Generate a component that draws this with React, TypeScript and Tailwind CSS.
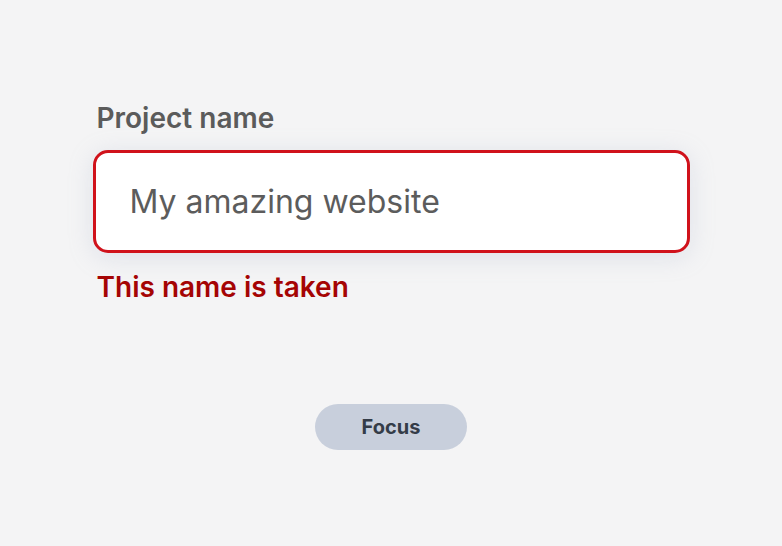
import React from "react";

export default function App() {
  return (
    <div className="min-h-[546px] w-[782px] bg-[#f4f4f5] flex flex-col items-center" style={{ fontFamily: "Inter, 'Noto Sans', sans-serif" }}>
      <div className="w-[597px] mt-[101px] flex flex-col">
        <label className="ml-[4px] text-[28px] leading-[34px] font-semibold text-[#5b5b5b]">Project name</label>
        <div className="mt-[15px] h-[103px] rounded-[15px] border-[3px] border-[#d0121b] bg-white shadow-[0_4px_24px_rgba(160,170,200,0.25)] flex items-center pl-[34px]">
          <span className="text-[32px] text-[#5c5c5c]">My amazing website</span>
        </div>
        <div className="ml-[4px] mt-[17px] text-[28px] leading-[34px] font-semibold text-[#a50404]">This name is taken</div>
      </div>
      <button className="mt-[100px] w-[152px] h-[46px] rounded-full bg-[#c8cfdc] text-[20px] font-bold text-[#343c48]">Focus</button>
    </div>
  );
}
